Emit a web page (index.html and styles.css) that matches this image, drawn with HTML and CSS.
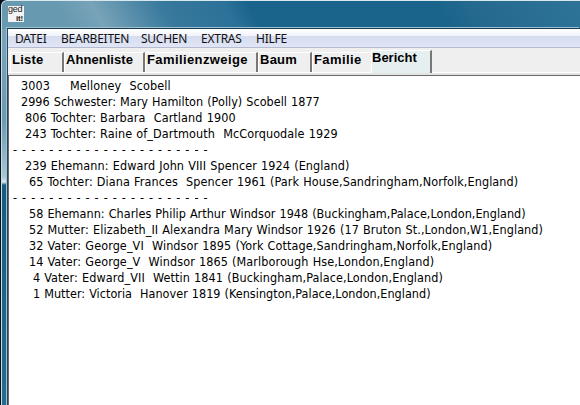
FILE: index.html
```html
<!DOCTYPE html>
<html lang="de">
<head>
  <meta charset="UTF-8" />
  <title>ged it!</title>
  <link rel="stylesheet" href="styles.css">
</head>
<body>
  <div class="window">
    <header class="titlebar">
      <div class="app-icon"><span>ged</span><span class="second">it!</span></div>
    </header>
    <div class="client">
      <nav class="menu">
        <span>DATEI</span>
        <span>BEARBEITEN</span>
        <span>SUCHEN</span>
        <span>EXTRAS</span>
        <span>HILFE</span>
      </nav>
      <div class="tabs">
        <div class="tab liste">Liste</div>
        <div class="tab ahnenliste">Ahnenliste</div>
        <div class="tab familienzweige">Familienzweige</div>
        <div class="tab baum">Baum</div>
        <div class="tab familie">Familie</div>
        <div class="tab bericht active">Bericht</div>
      </div>
      <main class="report">
        <div class="row d4"><span class="num">3003</span><span class="first">Melloney  Scobell</span></div>
        <div class="row d4 tight"><span class="num">2996</span><span>Schwester: Mary Hamilton (Polly) Scobell 1877</span></div>
        <div class="row d3"><span class="num">806</span><span>Tochter: Barbara  Cartland 1900</span></div>
        <div class="row d3"><span class="num">243</span><span>Tochter: Raine of_Dartmouth  McCorquodale 1929</span></div>
        <div class="row rule">- - - - - - - - - - - - - - - - - - - - - -</div>
        <div class="row d3"><span class="num">239</span><span>Ehemann: Edward John VIII Spencer 1924 (England)</span></div>
        <div class="row d2"><span class="num">65</span><span>Tochter: Diana Frances  Spencer 1961 (Park House,Sandringham,Norfolk,England)</span></div>
        <div class="row rule">- - - - - - - - - - - - - - - - - - - - - -</div>
        <div class="row d2 tight"><span class="num">58</span><span>Ehemann: Charles Philip Arthur Windsor 1948 (Buckingham,Palace,London,England)</span></div>
        <div class="row d2"><span class="num">52</span><span>Mutter: Elizabeth_II Alexandra Mary Windsor 1926 (17 Bruton St.,London,W1,England)</span></div>
        <div class="row d2"><span class="num">32</span><span>Vater: George_VI  Windsor 1895 (York Cottage,Sandringham,Norfolk,England)</span></div>
        <div class="row d2"><span class="num">14</span><span>Vater: George_V  Windsor 1865 (Marlborough Hse,London,England)</span></div>
        <div class="row d1"><span class="num">4</span><span>Vater: Edward_VII  Wettin 1841 (Buckingham,Palace,London,England)</span></div>
        <div class="row d1 tight"><span class="num">1</span><span>Mutter: Victoria  Hanover 1819 (Kensington,Palace,London,England)</span></div>
      </main>
    </div>
  </div>
</body>
</html>
```
FILE: styles.css
```css
* {
  box-sizing: border-box;
}

body {
  margin: 0;
  width: 580px;
  height: 405px;
  overflow: hidden;
  background: #07131c;
}

.window {
  height: 405px;
  margin-left: 1px;
  padding-left: 5px;
  border-top: 1px solid #d9e8ee;
  border-left: 1px solid #c5dbe5;
  border-top-left-radius: 6px;
  background:
    linear-gradient(to bottom, transparent 28px, #7ba4ba 28px, #6c9ab3 120px, #a9c6d3 176px, #dde8ec 181px, #1b5a80 184px, #286b90 100%) 0 0 / 5px 100% no-repeat,
    linear-gradient(60deg, #6799b1 0, #6799b1 60px, #78a3b8 90px, #38799d 150px, #2c7198 205px, #1a648b 225px, #1a648b 390px, #26698e 420px, #2d7398 100%) 0 0 / 100% 28px no-repeat,
    #6c9ab3;
}

.titlebar {
  height: 27px;
  padding: 5px 0 0 1px;
}

.app-icon {
  width: 16px;
  height: 16px;
  background: #f4f4f4;
  color: #222;
  font: 9px/8px "Liberation Sans", sans-serif;
  letter-spacing: -0.2px;
}

.app-icon span {
  display: block;
  height: 8px;
  line-height: 7px;
}

.app-icon .second {
  padding-right: 1px;
  font-size: 8px;
  line-height: 9px;
  text-align: right;
  font-weight: bold;
}

.client {
  height: 378px;
  border-top: 1px solid #173b50;
  border-left: 1px solid #25475b;
  background: #efefef;
  box-shadow: -1px -1px 0 #9fc1d0;
}

.menu {
  display: grid;
  grid-template-columns: 46px 80px 60px 55px 50px;
  height: 19px;
  padding-left: 7px;
  border-bottom: 1px solid #b5bacf;
  background: linear-gradient(to bottom, #fff 0, #f0f3fa 7px, #d5dcee 7px, #e0e6f6 100%);
  font: 12px/19px "Noto Sans", sans-serif;
  letter-spacing: -0.25px;
  color: #111;
}

.tabs {
  display: flex;
  height: 28px;
  padding: 3px 0 0 2px;
  align-items: flex-start;
  border-bottom: 1px solid #696969;
  box-shadow: inset 0 -2px #e3e3e3, inset 0 -3px #fff;
  font: bold 13px/13px "Liberation Sans", sans-serif;
  letter-spacing: 0.25px;
  color: #000;
}

.tab {
  height: 20px;
  margin-top: 1px;
  padding-left: 1px;
  border-top: 1px solid #fff;
  border-left: 1px solid #fff;
  border-right: 2px solid #777;
  border-top-left-radius: 2px;
  white-space: nowrap;
}

.liste { width: 54px; }

.ahnenliste {
  width: 81px;
  letter-spacing: 0.05px;
}

.familienzweige {
  width: 113px;
  letter-spacing: 0.4px;
}

.baum { width: 54px; }

.familie {
  width: 59px;
  border-right: 0;
  letter-spacing: 0.4px;
}

.bericht {
  width: 61px;
  letter-spacing: 0;
}

.tab.active {
  height: 23px;
  margin-top: -1px;
  padding-left: 0;
  background: #e5efef;
}

.report {
  height: 330px;
  padding: 2px 0 0 4px;
  border-left: 1px solid #696969;
  background: #fff;
  font: 12.5px/16px "DejaVu Sans Condensed", "DejaVu Sans", sans-serif;
  letter-spacing: 0.1px;
  word-spacing: 0.4px;
  color: #000;
}

.row {
  display: flex;
  height: 16px;
  gap: 4px;
  white-space: pre;
}

.d4 { padding-left: 8px; }
.d3 { padding-left: 12px; }
.d2 { padding-left: 16px; }
.d1 { padding-left: 20px; }

.first {
  padding-left: 16px;
}

.tight {
  letter-spacing: 0.03px;
}

.rule {
  letter-spacing: 0.72px;
  word-spacing: 0;
}
```
